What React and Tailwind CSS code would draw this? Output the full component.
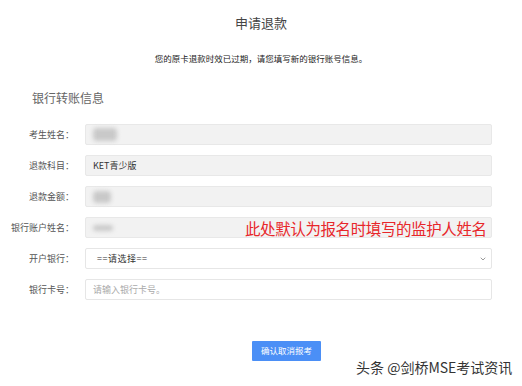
import { ChevronDown } from 'lucide-react'

const font = { fontFamily: '"Noto Sans CJK SC", "Noto Sans", sans-serif' }

const Row = ({ label, children, className = '' }) => (
  <div className="flex items-center h-[21px] mb-[10px]">
    <div className="w-[76px] text-right text-[9px] text-[#555] pr-[2px] whitespace-nowrap">{label}</div>
    <div className={`ml-[9px] w-[407px] h-[21px] border rounded-[2px] flex items-center px-[7px] text-[9px] relative ${className}`}>
      {children}
    </div>
  </div>
)

const Blur = ({ w, h = 10 }) => (
  <div className="flex items-center gap-[2px]">
    <div className="bg-[#c9c9c9] blur-[2px] rounded-sm" style={{ width: w, height: h }} />
  </div>
)

export default function App() {
  return (
    <div className="w-[522px] h-[386px] bg-white relative overflow-hidden" style={font}>
      <div className="pt-[13px] text-center text-[13px] text-[#444]">申请退款</div>
      <div className="mt-[19px] text-center text-[8.5px] text-[#222]">您的原卡退款时效已过期，请您填写新的银行账号信息。</div>

      <div className="mt-[25px] pl-[32px] text-[12px] text-[#666]">银行转账信息</div>

      <div className="mt-[17px]">
        <Row label="考生姓名：" className="bg-[#f2f2f2] border-[#e8e8e8]"><Blur w={24} h={13} /></Row>
        <Row label="退款科目：" className="bg-[#f2f2f2] border-[#e8e8e8] text-[#333]">KET青少版</Row>
        <Row label="退款金额：" className="bg-[#f2f2f2] border-[#e8e8e8]"><Blur w={18} h={12} /></Row>
        <Row label="银行账户姓名：" className="bg-[#f2f2f2] border-[#e8e8e8]"><Blur w={20} h={6} /></Row>
        <Row label="开户银行：" className="bg-white border-[#e6e6e6] text-[#333]">
          <span className="pl-[4px] tracking-[0.5px]">==请选择==</span>
          <ChevronDown size={8} strokeWidth={2} className="absolute right-[4px] text-[#666]" />
        </Row>
        <Row label="银行卡号：" className="bg-white border-[#e6e6e6] text-[#aaa]">请输入银行卡号。</Row>
      </div>

      <div className="absolute left-[245px] top-[217px] text-[15.5px] leading-[22px] text-[#e8262a] tracking-[-0.4px] whitespace-nowrap">
        此处默认为报名时填写的监护人姓名
      </div>

      <div className="mt-[35px] pl-[252px]">
        <button className="w-[69px] h-[20px] bg-[#4b8ff6] text-white text-[8.5px] rounded-[1px]">确认取消报考</button>
      </div>

      <div className="absolute left-[356px] top-[357px] text-[14px] text-[#333] whitespace-nowrap">
        头条 @剑桥MSE考试资讯
      </div>
    </div>
  )
}
